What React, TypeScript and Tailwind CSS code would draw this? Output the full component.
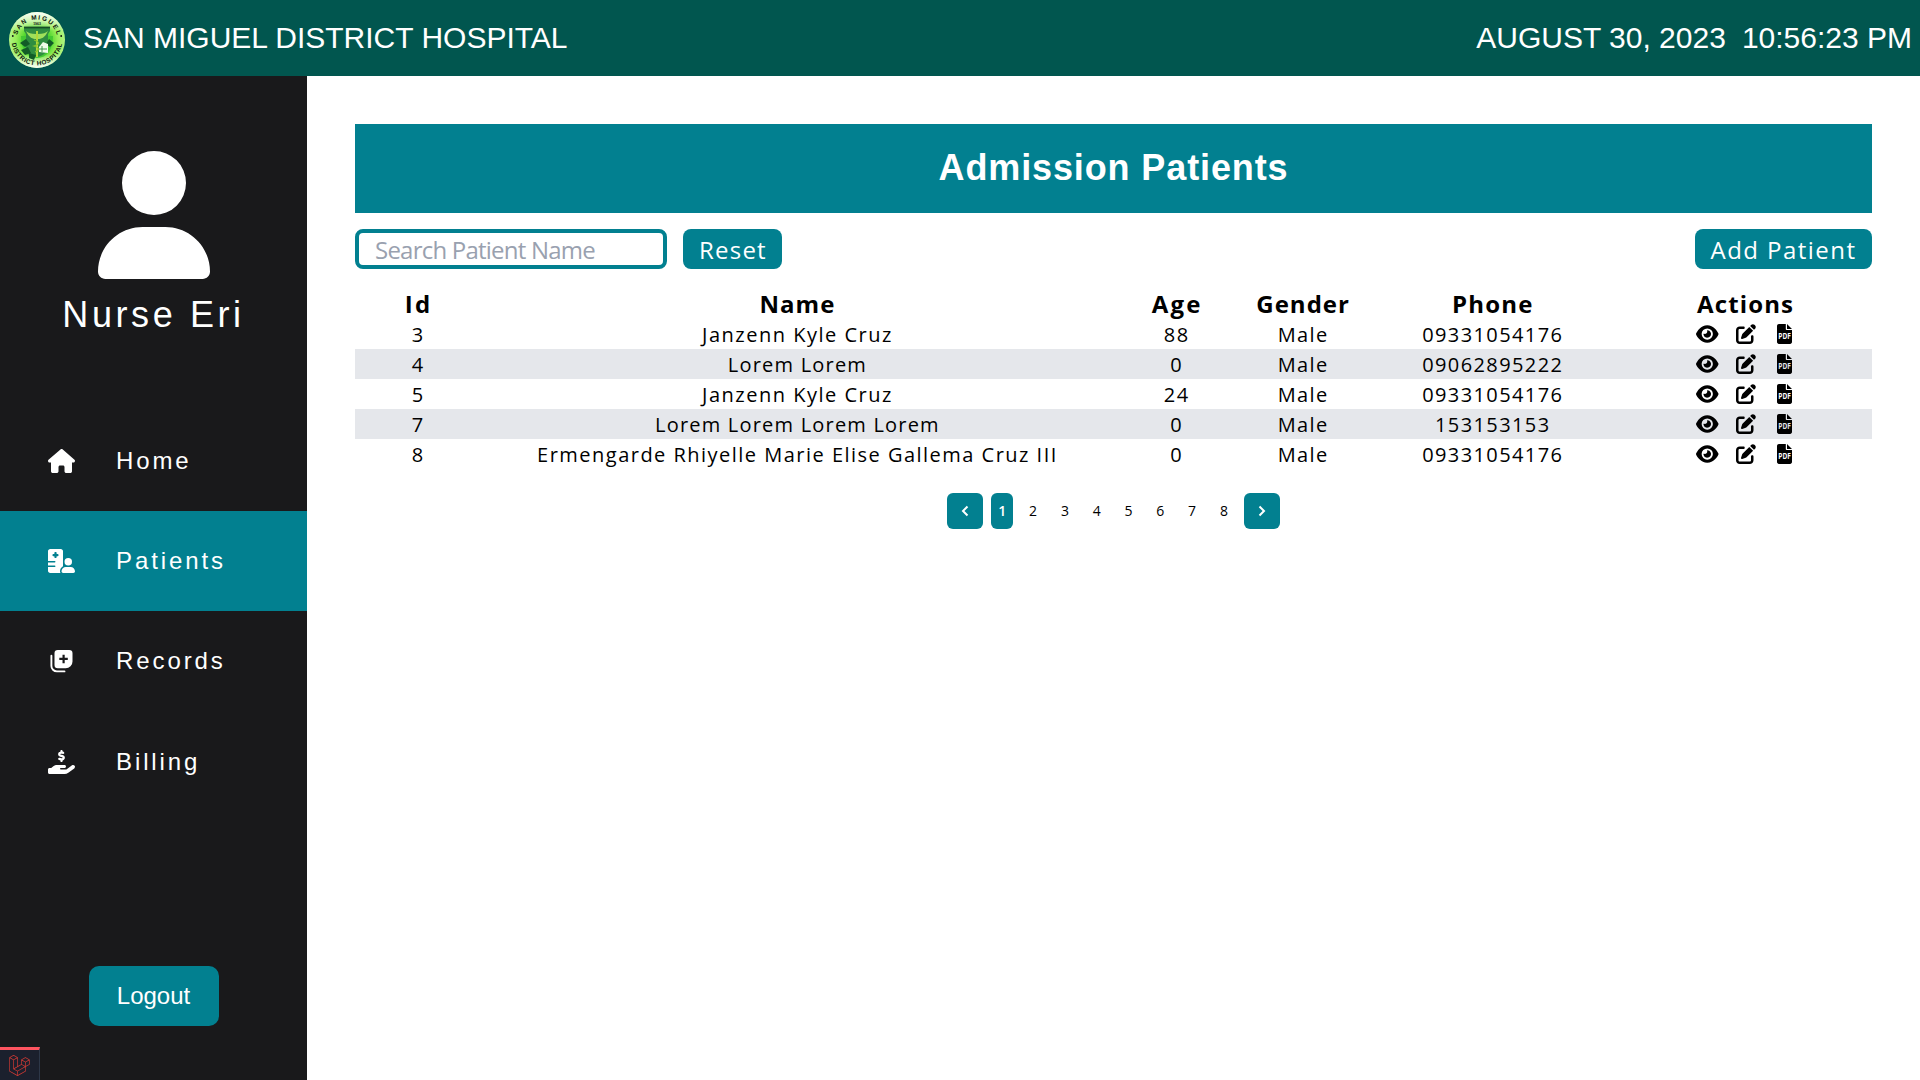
import { FaUser, FaHouse, FaHospitalUser, FaHandHoldingDollar, FaEye, FaPenToSquare } from "react-icons/fa6";
import { SiLaravel } from "react-icons/si";

type Patient = {
  id: number;
  name: string;
  nameTracking: string;
  age: number;
  phone: string;
};

const patients: Patient[] = [
  { id: 3, name: "Janzenn Kyle Cruz", nameTracking: "tracking-[1.5px]", age: 88, phone: "09331054176" },
  { id: 4, name: "Lorem Lorem", nameTracking: "tracking-[1.2px]", age: 0, phone: "09062895222" },
  { id: 5, name: "Janzenn Kyle Cruz", nameTracking: "tracking-[1.5px]", age: 24, phone: "09331054176" },
  { id: 7, name: "Lorem Lorem Lorem Lorem", nameTracking: "tracking-[1.2px]", age: 0, phone: "153153153" },
  {
    id: 8,
    name: "Ermengarde Rhiyelle Marie Elise Gallema Cruz III",
    nameTracking: "tracking-[1.48px]",
    age: 0,
    phone: "09331054176",
  },
];

const columns = [
  { label: "Id", className: "col-span-1 pl-px tracking-[2.4px]" },
  { label: "Name", className: "col-span-5 tracking-[1px]" },
  { label: "Age", className: "col-span-1 pl-px tracking-[2.2px]" },
  { label: "Gender", className: "col-span-1 tracking-[1px]" },
  { label: "Phone", className: "col-span-2 tracking-[1.2px]" },
  { label: "Actions", className: "col-span-2 tracking-[1.15px]" },
];

function Seal() {
  return (
    <svg viewBox="0 0 56 56" className="size-14 shrink-0">
      <defs>
        <radialGradient id="seal" cx="50%" cy="52%" r="52%">
          <stop offset="0.45" stopColor="#4fd52c" />
          <stop offset="0.72" stopColor="#98ee58" />
          <stop offset="1" stopColor="#b4f58a" />
        </radialGradient>
        <linearGradient id="shine" x1="0" y1="0" x2="0" y2="1">
          <stop offset="0" stopColor="#fff" stopOpacity="0.95" />
          <stop offset="0.34" stopColor="#fff" stopOpacity="0" />
          <stop offset="0.75" stopColor="#fff" stopOpacity="0" />
          <stop offset="1" stopColor="#fff" stopOpacity="0.95" />
        </linearGradient>
        <path id="arcTop" d="M7.6 28 A20.4 20.4 0 1 1 48.4 28" />
        <path id="arcBottom" d="M2.6 28 A25.4 25.4 0 0 0 53.4 28" />
      </defs>
      <circle cx="28" cy="28" r="28" fill="url(#seal)" />
      <circle cx="28" cy="28" r="28" fill="url(#shine)" />
      <path d="M12 24c0 13 6 22 16 22s16-9 16-22z" fill="#43c832" />
      <path d="M15 15h26v4l-2 3v13c0 5-5 9-11 10-6-1-11-5-11-10V22l-2-3z" fill="#2f8d40" />
      <path d="M15 15.5h26" stroke="#174e28" strokeWidth="1.8" />
      <path d="M11 31l6-4 4 5-5 3zM12 38l7-3 3 6-6 2zM40 27l5 4-4 4-4-3zM20 41l7 2-2 5-5-2z" fill="#125c27" />
      <path d="M17 19c3 7 7 8 10 8v-5c-5 0-8-1-10-3zM39 19c-3 7-7 8-10 8v-5c5 0 8-1 10-3z" fill="#9fe05a" />
      <path d="M28 19v26" stroke="#b2d83a" strokeWidth="2" />
      <path d="M25 28c6 2 6 4 0 6 6 2 6 4 1 6" stroke="#84bf2d" strokeWidth="1.3" fill="none" />
      <path d="M30 35l4-5 5 2v9l-9-1z" fill="#effbe9" />
      <path d="M33 34v6M30 37h8" stroke="#2f8d3c" strokeWidth="0.9" />
      <text x="28" y="13" textAnchor="middle" fontSize="3.4" fontWeight="700" fill="#111">
        1963
      </text>
      <g fontSize="6.4" fontWeight="700" fill="#0b140b" textAnchor="middle">
        <text letterSpacing="1.5">
          <textPath href="#arcTop" startOffset="51%">
            SAN MIGUEL
          </textPath>
        </text>
        <text letterSpacing="0.55">
          <textPath href="#arcBottom" startOffset="50%">
            DISTRICT HOSPITAL
          </textPath>
        </text>
      </g>
      <circle cx="3.8" cy="24" r="0.9" fill="#111" />
      <circle cx="52.2" cy="24" r="0.9" fill="#111" />
    </svg>
  );
}

function RecordsIcon() {
  return (
    <svg viewBox="0 0 24 24" className="size-6" fill="none">
      <path
        fillRule="evenodd"
        fill="currentColor"
        d="M7.8 1h11.4A3.3 3.3 0 0 1 22.5 4.3v8.2a6.8 6.8 0 0 1-6.8 6.8H7.8A3.3 3.3 0 0 1 4.5 16V4.3A3.3 3.3 0 0 1 7.8 1zM12.5 5.7v3H9.3v2.4h3.2v3.1h2.2v-3.1h3.1V8.7h-3.1v-3z"
      />
      <path d="M1.4 6.7v10.2a5.5 5.5 0 0 0 5.5 5.5h7.6" stroke="currentColor" strokeWidth="1.9" strokeLinecap="round" />
    </svg>
  );
}

function PdfIcon({ knockout }: { knockout: string }) {
  return (
    <svg viewBox="0 0 15 20" className="h-5 w-[15px] overflow-visible">
      <path
        fill="currentColor"
        d="M1.9 0H8.8v4.9c0 .6.4 1 1 1H15v12.2c0 1-.9 1.9-1.9 1.9H1.9C.9 20 0 19.1 0 18.1V1.9C0 .9.9 0 1.9 0zM10 0l5 4.9h-5z"
      />
      <text
        x="1.3"
        y="15"
        textLength="12.6"
        lengthAdjust="spacingAndGlyphs"
        fontSize="9"
        fontWeight="700"
        letterSpacing="0"
        className={knockout}
      >
        PDF
      </text>
    </svg>
  );
}

const navItems = [
  { label: "Home", icon: <FaHouse className="h-6 w-[27px]" />, active: false },
  { label: "Patients", icon: <FaHospitalUser className="h-6 w-[27px]" />, active: true },
  { label: "Records", icon: <RecordsIcon />, active: false },
  { label: "Billing", icon: <FaHandHoldingDollar className="h-6 w-[27px]" />, active: false },
];

function Sidebar() {
  return (
    <aside className="relative flex w-[307px] shrink-0 flex-col items-center bg-[#19191b] text-white">
      <FaUser className="mt-[75px] h-32 w-28" />
      <div className="mt-3.5 text-[36px] leading-[44px] tracking-[3.6px]">Nurse Eri</div>
      <nav className="mt-[74px] w-full">
        {navItems.map((item) => (
          <a
            key={item.label}
            className={
              item.active
                ? "flex h-[100px] items-center bg-[#028090] pl-12 text-2xl tracking-[2.9px]"
                : "flex h-[100px] items-center pl-12 text-2xl tracking-[2.9px] last:h-[102px]"
            }
          >
            <span className="flex w-[27px] justify-center">{item.icon}</span>
            <span className="ml-[41px]">{item.label}</span>
          </a>
        ))}
      </nav>
      <button className="mt-[153px] h-[60px] w-[130px] rounded-[10px] bg-[#028090] text-2xl">Logout</button>
      <div className="absolute bottom-0 left-0 flex h-[33px] w-10 justify-center border-t-3 border-r border-t-[#ff5560] border-r-[#2d3748] bg-[#1b202d] pt-[5px]">
        <SiLaravel className="size-[21px] text-[#d63a34]" />
      </div>
    </aside>
  );
}

function Chevron({ d }: { d: string }) {
  return (
    <svg viewBox="0 0 12 12" className="size-3" fill="none" stroke="currentColor" strokeWidth="2">
      <path d={d} />
    </svg>
  );
}

function Pagination() {
  return (
    <div className="mt-6 flex h-9 items-center justify-center gap-2 text-sm font-medium">
      <button className="flex size-9 items-center justify-center rounded-md bg-[#028090] text-white">
        <Chevron d="M8.5 1.5L4 6L8.5 10.5" />
      </button>
      <button className="h-9 w-[22px] rounded-md bg-[#028090] font-semibold text-white">1</button>
      {[2, 3, 4, 5, 6, 7, 8].map((n) => (
        <button key={n} className="h-9 w-[23.8px]">
          {n}
        </button>
      ))}
      <button className="flex size-9 items-center justify-center rounded-md bg-[#028090] text-white">
        <Chevron d="M3.5 1.5L8 6L3.5 10.5" />
      </button>
    </div>
  );
}

export default function App() {
  return (
    <div className="flex h-[1080px] w-full flex-col overflow-hidden bg-white font-['Liberation_Sans',sans-serif] text-black">
      <header className="flex h-[76px] shrink-0 items-center bg-[#01564f] pr-2 pl-[9px] text-[30px] text-white">
        <div className="pt-[3px]">
          <Seal />
        </div>
        <div className="ml-[18px] pb-0.5">SAN MIGUEL DISTRICT HOSPITAL</div>
        <div className="ml-auto pb-0.5">AUGUST 30, 2023</div>
        <div className="ml-4 pb-0.5">10:56:23 PM</div>
      </header>
      <div className="flex min-h-0 flex-1">
        <Sidebar />
        <main className="flex-1 p-12 font-['Open_Sans',sans-serif]">
          <h1 className="flex h-[89px] items-center justify-center bg-[#028090] pb-0.5 font-['Liberation_Sans',sans-serif] text-[36px] font-bold tracking-[0.88px] text-white">
            Admission Patients
          </h1>
          <div className="mt-4 flex h-10 text-2xl text-white">
            <input
              placeholder="Search Patient Name"
              className="h-10 w-[312px] rounded-lg border-4 border-[#028090] px-4 tracking-[-0.78px] placeholder:text-gray-400"
            />
            <button className="ml-4 h-10 w-[99px] rounded-lg bg-[#028090] pt-0.5 pl-px tracking-[1.2px]">Reset</button>
            <button className="ml-auto h-10 w-[177px] rounded-lg bg-[#028090] pt-0.5 tracking-[1.46px]">
              Add Patient
            </button>
          </div>
          <div className="mt-4 grid h-[34px] grid-cols-12 text-center text-2xl leading-[37px] font-bold">
            {columns.map((c) => (
              <div key={c.label} className={c.className}>
                {c.label}
              </div>
            ))}
          </div>
          {patients.map((p, i) => (
            <div
              key={p.id}
              className={
                i % 2
                  ? "grid h-[30px] grid-cols-12 bg-gray-200 text-center text-xl leading-8 tracking-[1.4px]"
                  : "grid h-[30px] grid-cols-12 text-center text-xl leading-8 tracking-[1.4px]"
              }
            >
              <div>{p.id}</div>
              <div className={`col-span-5 ${p.nameTracking}`}>{p.name}</div>
              <div>{p.age}</div>
              <div>Male</div>
              <div className="col-span-2">{p.phone}</div>
              <div className="col-span-2 flex h-[30px] items-center justify-center pr-[3px]">
                <FaEye className="h-5 w-[22.5px]" />
                <FaPenToSquare className="ml-[17.5px] size-5" />
                <span className="ml-[21px]">
                  <PdfIcon knockout={i % 2 ? "fill-gray-200" : "fill-white"} />
                </span>
              </div>
            </div>
          ))}
          <Pagination />
        </main>
      </div>
    </div>
  );
}
